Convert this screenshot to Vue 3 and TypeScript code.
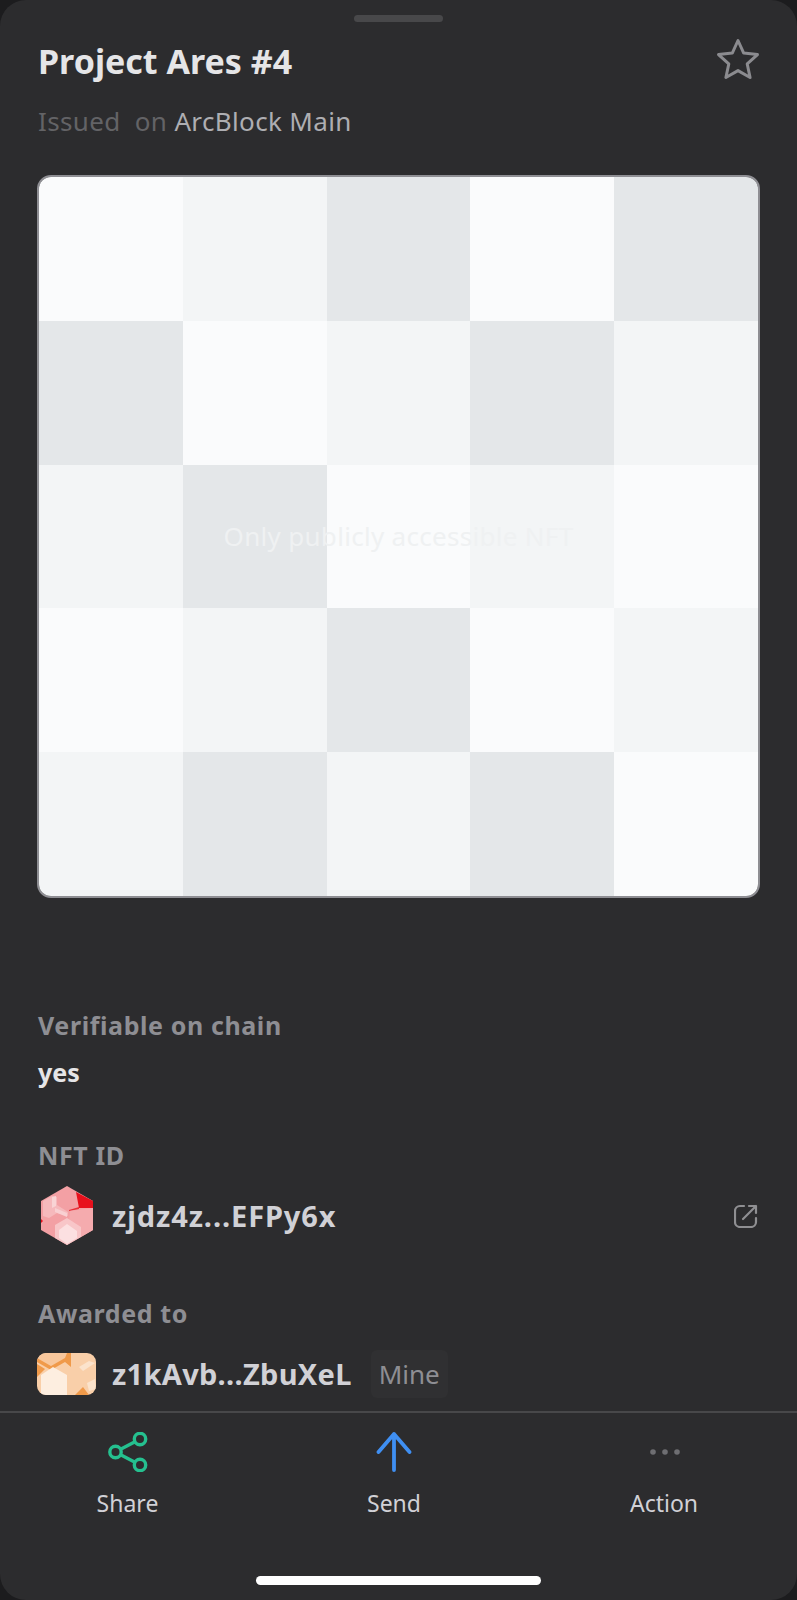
<script setup lang="ts">
const shades = [
  'w', 'l', 'd', 'w', 'd',
  'd', 'w', 'l', 'd', 'l',
  'l', 'd', 'w', 'l', 'w',
  'w', 'l', 'd', 'w', 'l',
  'l', 'd', 'l', 'd', 'w',
];
</script>

<template>
  <div class="sheet">
    <div class="handle"></div>

    <div class="head">
      <h1 class="title">Project Ares #4</h1>
      <svg class="star" viewBox="0 0 44 44" fill="none">
        <path
          d="M22 2.500l5.700 12.600 13.800 1.500-10.300 9.300 2.900 13.600L22 32.600l-12.100 6.900 2.900-13.600-10.300-9.300 13.800-1.500z"
          stroke="#8b8b8f"
          stroke-width="3"
          stroke-linejoin="round"
        />
      </svg>
    </div>
    <p class="sub">Issued&nbsp; on <span>ArcBlock Main</span></p>

    <div class="art">
      <div class="cells">
        <div v-for="(s, i) in shades" :key="i" class="cell" :class="s"></div>
      </div>
      <span class="art-text">Only publicly accessible NFT</span>
    </div>

    <div class="info">
      <div class="label label-first">Verifiable on chain</div>
      <div class="value">yes</div>

      <div class="label label-nft">NFT ID</div>
      <div class="row row-nft">
        <svg class="hex" viewBox="0 0 52 59">
          <polygon points="26,0 52,15 52,44 26,59 0,44 0,15" fill="#f3a0a4" />
          <polygon points="35,6 52,15 52,22 38,22" fill="#e8101c" />
          <polygon points="38,21 38,23 28,25 28,24" fill="#e8303a" />
          <polygon points="0,33 2,35 0,37" fill="#e8101c" />
          <polygon points="2,15 11,10 16,11 16,19 27,26 27,30 16,27 8,32 2,30" fill="#f6b9bc" />
          <polygon points="11,11 15,10 15,20 11,22" fill="#f9d4d5" />
          <polygon points="14,22 26,27 26,31 14,26" fill="#f9d0d2" />
          <polygon points="29,25 52,22 52,44 40,51 28,38" fill="#f5abae" />
          <polygon points="14,39 26,32 40,41 40,51 26,59 14,52" fill="#f8c6c8" />
          <polygon points="18,44 26,38 36,45 36,52 26,58 18,52" fill="#fce0e1" />
        </svg>
        <span class="addr addr-nft">zjdz4z...EFPy6x</span>
        <svg class="ext" viewBox="0 0 24 24" fill="none" stroke="#8f8f92" stroke-width="2.200" stroke-linecap="round" stroke-linejoin="round">
          <path d="M10 2H6a5 5 0 0 0-5 5v11a5 5 0 0 0 5 5h11a5 5 0 0 0 5-5v-4" />
          <path d="M9 15L22 2M15 2h7v7" />
        </svg>
      </div>

      <div class="label label-award">Awarded to</div>
      <div class="row row-award">
        <svg class="avatar" viewBox="0 0 59 42">
          <rect width="59" height="42" fill="#f9cfa9" />
          <polygon points="0,0 33,0 33,13 28,6 14,13 0,5" fill="#f8c79c" />
          <polygon points="0,5 14,13 28,5 30,0 34,0 34,14 28,9 14,17 0,9" fill="#f09a4a" />
          <polygon points="0,11 8,16 0,24" fill="#f09a4a" />
          <polygon points="4,22 16,14 30,22 30,42 4,42" fill="#fdeee0" />
          <polygon points="42,14 52,8 58,10 46,18" fill="#fbe3cc" />
          <polygon points="38,42 46,34 52,42" fill="#f09a4a" />
          <polygon points="50,30 58,26 59,36 52,38" fill="#fbe3cc" />
        </svg>
        <span class="addr addr-award">z1kAvb...ZbuXeL</span>
        <span class="chip">Mine</span>
      </div>
    </div>

    <div class="bar">
      <div class="action">
        <svg class="icon" viewBox="0 0 40 40" fill="none" stroke="#25c08f" stroke-width="3.400">
          <circle cx="7.500" cy="20" r="5.700" />
          <circle cx="32" cy="7" r="5.700" />
          <circle cx="32" cy="33" r="5.700" />
          <path d="M12.600 17.300L27 9.700M12.600 22.700L27 30.300" />
        </svg>
        <span>Share</span>
      </div>
      <div class="action">
        <svg class="icon" viewBox="0 0 40 40" fill="none" stroke="#3f8ff2" stroke-width="3.800" stroke-linecap="round" stroke-linejoin="round">
          <path d="M20 38V2M4.500 20L20 2l15.500 18" />
        </svg>
        <span>Send</span>
      </div>
      <div class="action">
        <svg class="icon" viewBox="0 0 40 40" fill="#6e6e72">
          <circle cx="9" cy="20" r="2.800" />
          <circle cx="21" cy="20" r="2.800" />
          <circle cx="33" cy="20" r="2.800" />
        </svg>
        <span>Action</span>
      </div>
    </div>

    <div class="home"></div>
  </div>
</template>

<style>
html,
body {
  background: #1c1c1e;
}
</style>

<style scoped>
.sheet {
  width: 797px;
  height: 1600px;
  box-sizing: border-box;
  background: #2c2c2e;
  border-radius: 26px;
  overflow: hidden;
  font-family: 'Noto Sans', Lato, sans-serif;
  display: flex;
  flex-direction: column;
  padding-top: 15px;
}

.handle {
  width: 89px;
  height: 7px;
  margin: 0 auto;
  border-radius: 4px;
  background: #48484a;
}

.head {
  display: flex;
  justify-content: space-between;
  align-items: flex-start;
  padding: 16px 37px 0 38px;
}

.title {
  margin: 0;
  font-size: 34px;
  line-height: 46px;
  font-weight: 700;
  color: #e5e5e7;
}

.star {
  width: 44px;
  height: 44px;
}

.sub {
  margin: 19px 0 0 38px;
  font-size: 26px;
  line-height: 36px;
  letter-spacing: 0.35px;
  color: #636366;
}

.sub span {
  color: #aeaeb2;
}

.art {
  position: relative;
  width: 723px;
  height: 723px;
  box-sizing: border-box;
  margin: 36px 0 0 37px;
  border: 2px solid #8e8e93;
  border-radius: 14px;
  overflow: hidden;
}

.cells {
  display: grid;
  grid-template-columns: repeat(5, 1fr);
  grid-template-rows: repeat(5, 1fr);
  height: 100%;
}

.w {
  background: #fafbfc;
}

.l {
  background: #f3f5f6;
}

.d {
  background: #e4e7e9;
}

.art-text {
  position: absolute;
  left: 0;
  right: 0;
  top: 341px;
  text-align: center;
  font-size: 26px;
  line-height: 36px;
  letter-spacing: 0.3px;
  color: #eff1f2;
}

.info {
  padding: 0 38px;
}

.label {
  font-size: 25px;
  line-height: 34px;
  font-weight: 700;
  letter-spacing: 0.6px;
  color: #8e8e93;
}

.label-first {
  margin-top: 110px;
}

.value {
  margin-top: 13px;
  font-size: 25px;
  line-height: 34px;
  font-weight: 700;
  color: #e5e5e7;
}

.label-nft {
  margin-top: 49px;
}

.row {
  display: flex;
  align-items: center;
}

.row-nft {
  margin-top: 14px;
  height: 59px;
  padding-left: 3px;
}

.hex {
  width: 52px;
  height: 59px;
  flex: none;
  margin-right: 19px;
}

.addr {
  font-size: 29px;
  line-height: 40px;
  font-weight: 700;
  color: #d1d1d6;
}

.addr-nft {
  letter-spacing: 0.9px;
}

.addr-award {
  letter-spacing: 0.3px;
}

.ext {
  width: 24px;
  height: 24px;
  margin-left: auto;
  margin-right: 1px;
}

.label-award {
  margin-top: 51px;
}

.row-award {
  margin-top: 20px;
  height: 48px;
  margin-left: -1px;
}

.avatar {
  width: 59px;
  height: 42px;
  border-radius: 9px;
  flex: none;
  margin-right: 16px;
}

.chip {
  margin-left: 19px;
  padding: 0 8px;
  height: 48px;
  line-height: 48px;
  border-radius: 6px;
  background: #303032;
  font-size: 26px;
  color: #8e8e93;
}

.bar {
  position: absolute;
  top: 1411px;
  left: 0;
  width: 797px;
  height: 110px;
  border-top: 2px solid #48484a;
  box-sizing: border-box;
  background: #2c2c2e;
  display: grid;
  grid-template-columns: 255px 278px 262px;
}

.action {
  display: flex;
  flex-direction: column;
  align-items: center;
  padding-top: 19px;
  font-size: 23px;
  line-height: 30px;
  color: #d1d1d6;
}

.icon {
  width: 40px;
  height: 40px;
  margin-bottom: 16px;
}

.home {
  position: absolute;
  left: 256px;
  top: 1576px;
  width: 285px;
  height: 9px;
  border-radius: 5px;
  background: #fff;
}
</style>
